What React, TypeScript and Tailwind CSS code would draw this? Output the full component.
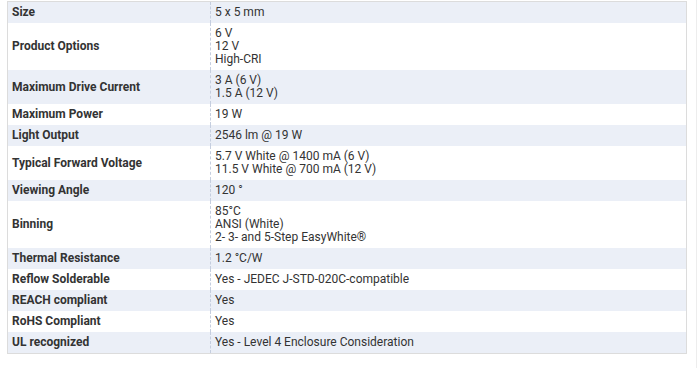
const specs: [string, string[]][] = [
  ["Size", ["5 x 5 mm"]],
  ["Product Options", ["6 V", "12 V", "High-CRI"]],
  ["Maximum Drive Current", ["3 A (6 V)", "1.5 A (12 V)"]],
  ["Maximum Power", ["19 W"]],
  ["Light Output", ["2546 lm @ 19 W"]],
  ["Typical Forward Voltage", ["5.7 V White @ 1400 mA (6 V)", "11.5 V White @ 700 mA (12 V)"]],
  ["Viewing Angle", ["120 °"]],
  ["Binning", ["85°C", "ANSI (White)", "2- 3- and 5-Step EasyWhite®"]],
  ["Thermal Resistance", ["1.2 °C/W"]],
  ["Reflow Solderable", ["Yes - JEDEC J-STD-020C-compatible"]],
  ["REACH compliant", ["Yes"]],
  ["RoHS Compliant", ["Yes"]],
  ["UL recognized", ["Yes - Level 4 Enclosure Consideration"]],
]

export default function App() {
  return (
    <div className="w-[697px] h-[368px] bg-white border-r border-[#ededed] pt-px pl-[7px] font-['Roboto',sans-serif] text-[12px] leading-[13px] text-[#333]">
      <table className="w-[680px] border-collapse border border-[#dcdcdc]">
        <tbody>
          {specs.map(([label, values], i) => (
            <tr key={label} className={i % 2 === 0 ? "bg-[#ebeff7]" : "bg-white"}>
              <td className="w-[203px] px-1 py-1 align-middle font-bold border-r border-dashed border-[#c5cedf]">
                {label}
              </td>
              <td className="px-1 py-1 align-middle">
                {values.map((v) => (
                  <div key={v}>{v}</div>
                ))}
              </td>
            </tr>
          ))}
        </tbody>
      </table>
    </div>
  )
}
